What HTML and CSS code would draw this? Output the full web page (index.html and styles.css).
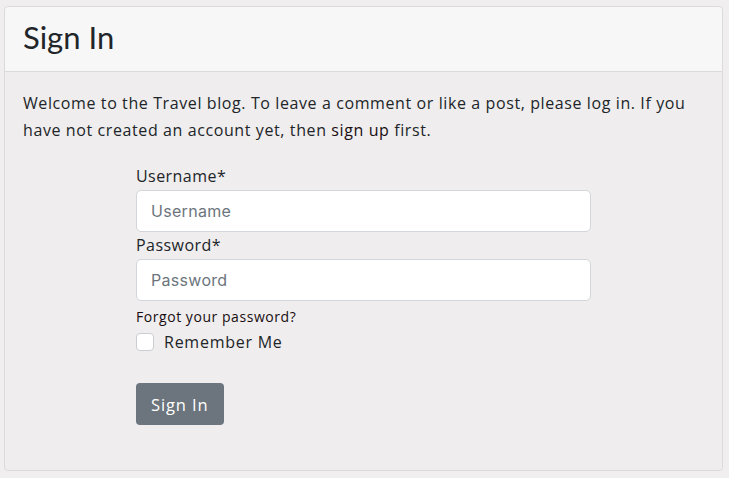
FILE: index.html
```html
<!DOCTYPE html>
<html lang="en">
<head>
<meta charset="utf-8">
<title>Sign In</title>
<link rel="stylesheet" href="styles.css">
</head>
<body>
<div class="card">
  <div class="card-header">
    <h2 class="title">Sign In</h2>
  </div>
  <div class="card-body">
    <p class="intro">Welcome to the Travel blog. To leave a comment or like a post, please log in. If you have not created an account yet, then <a class="link" href="#">sign up</a> first.</p>
    <form class="form">
      <label class="label" for="u">Username*</label>
      <input class="input" id="u" type="text" placeholder="Username">
      <label class="label" for="p">Password*</label>
      <input class="input" id="p" type="password" placeholder="Password">
      <a class="forgot" href="#">Forgot your password?</a>
      <label class="check">
        <span class="box"></span>
        <span class="check-text">Remember Me</span>
      </label>
      <button class="btn" type="button">Sign In</button>
    </form>
  </div>
</div>
</body>
</html>
```
FILE: styles.css
```css
html, body {
  margin: 0;
  padding: 0;
  background: #f0eeee;
}
body {
  padding: 6px 6px 8px 4px;
  font-family: "Open Sans", Lato, sans-serif;
  letter-spacing: 0.45px;
  color: #212529;
}
.card {
  background: #efeded;
  border: 1px solid #dcdada;
  border-radius: 4px;
  box-sizing: border-box;
  height: 465px;
}
.card-header {
  background: #f7f7f7;
  border-bottom: 1px solid #dcdada;
  border-radius: 4px 4px 0 0;
  padding: 10px 18px 14px;
}
.title {
  margin: 0;
  font-family: Lato, sans-serif;
  letter-spacing: 0;
  font-size: 31px;
  line-height: 40px;
  font-weight: 400;
  color: #212529;
}
.card-body {
  padding: 18px 18px;
}
.intro {
  margin: 0;
  font-size: 16px;
  line-height: 27px;
  letter-spacing: 0.6px;
  color: #212529;
}
.link {
  color: #1a0d12;
  text-decoration: none;
}
.form {
  width: 455px;
  margin: 19px auto 0;
  display: flex;
  flex-direction: column;
  align-items: flex-start;
}
.label {
  font-size: 16px;
  line-height: 24px;
  margin-top: 1px;
  margin-bottom: 2px;
}
.input {
  box-sizing: border-box;
  width: 100%;
  height: 42px;
  border: 1px solid #d3d6da;
  border-radius: 5px;
  background: #fff;
  padding: 0 14px;
  font-family: Inter, sans-serif;
  letter-spacing: 0.3px;
  font-size: 16px;
  color: #212529;
  outline: none;
}
.input::placeholder {
  color: #6c757d;
}
.forgot {
  margin-top: 5px;
  font-size: 14px;
  line-height: 21px;
  letter-spacing: 0.55px;
  color: #1a0d12;
  text-decoration: none;
}
.check {
  margin-top: 5px;
  display: flex;
  align-items: center;
  gap: 10px;
  font-size: 16px;
  line-height: 20px;
  letter-spacing: 0.75px;
}
.box {
  width: 16px;
  height: 16px;
  background: #fff;
  border: 1px solid #c9cdd1;
  border-radius: 4px;
}
.btn {
  margin-top: 31px;
  height: 42px;
  padding: 0 15px;
  background: #6c757d;
  color: #fff;
  border: none;
  border-radius: 4px;
  font-family: "Open Sans", sans-serif;
  letter-spacing: 0.9px;
  font-size: 16.5px;
}
```
